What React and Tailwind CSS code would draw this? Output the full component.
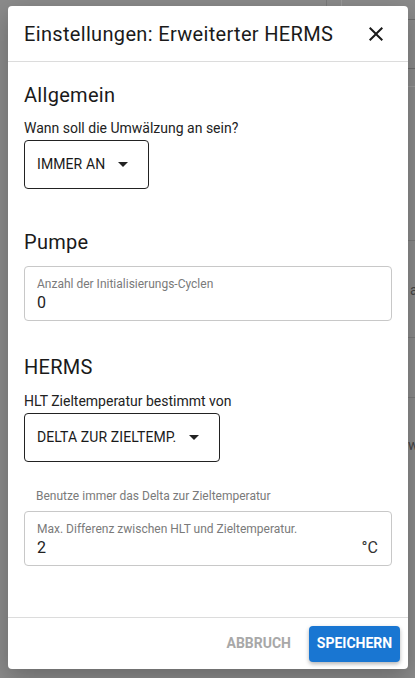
import React from "react";

function SelectBox({ value, width }) {
  return (
    <div
      className={`${width} h-[49px] mt-[2px] border border-[#222] rounded flex items-center justify-between pl-3 pr-[20px]`}
    >
      <span className="text-[14px] font-normal text-[#1a1a1a] tracking-[0.1px]">{value}</span>
      <svg width="10" height="5" viewBox="0 0 10 5">
        <path d="M0 0 L10 0 L5 5 Z" fill="#222" />
      </svg>
    </div>
  );
}

function TextField({ label, value, unit }) {
  return (
    <div className="h-[55px] border border-[#c8c8c8] rounded px-3 pt-[9px] flex flex-col">
      <span className="text-[12px] leading-[16px] text-[#7a7a7a]">{label}</span>
      <div className="flex justify-between items-center mt-[1px]">
        <span className="text-[16px] leading-[20px] text-[#222]">{value}</span>
        {unit && <span className="text-[16px] leading-[20px] text-[#333] pr-[1px]">{unit}</span>}
      </div>
    </div>
  );
}

function App() {
  return (
    <div className="min-h-screen h-[678px] bg-[#8b8b8b] relative overflow-hidden font-['Roboto',sans-serif]">
      {/* faint content behind the overlay */}
      <div className="absolute left-[408px] top-[19px] w-[7px] h-[1px] bg-[#6e6e6e]" />
      <div className="absolute left-[408px] top-[68px] w-[7px] h-[1px] bg-[#6e6e6e]" />
      <div className="absolute left-[408px] top-[86px] w-[7px] h-[1px] bg-[#9a9a9a]" />
      <div className="absolute left-[408px] top-[240px] w-[7px] h-[1px] bg-[#7a7a7a]" />
      <div className="absolute left-[410px] top-[280px] text-[14px] text-[#444]">at</div>
      <div className="absolute left-[408px] top-[337px] w-[7px] h-[1px] bg-[#7a7a7a]" />
      <div className="absolute left-[408px] top-[397px] w-[7px] h-[1px] bg-[#7a7a7a]" />
      <div className="absolute left-[408px] top-[435px] text-[14px] text-[#444]">wi</div>
      <div className="absolute left-[326px] top-0 w-[1px] h-[6px] bg-[#7a7a7a]" />
      <div className="absolute left-[341px] top-0 w-[1px] h-[6px] bg-[#9a9a9a]" />

      <div className="pt-[6px] pl-2 relative">
        <div className="w-[400px] h-[663px] bg-white rounded shadow-[0_8px_24px_rgba(0,0,0,0.25)] flex flex-col">
          <div className="h-[56px] px-4 flex items-center justify-between border-b border-[#dcdcdc]">
            <span className="text-[20px] text-[#1a1a1a] tracking-[0.33px]">Einstellungen: Erweiterter HERMS</span>
            <svg width="24" height="24" viewBox="0 0 24 24" className="mr-[4px]">
              <path
                d="M19 6.41 17.59 5 12 10.59 6.41 5 5 6.41 10.59 12 5 17.59 6.41 19 12 13.41 17.59 19 19 17.59 13.41 12z"
                fill="#1a1a1a"
              />
            </svg>
          </div>

          <div className="flex-1 px-4 pt-[19px] flex flex-col">
            <h2 className="text-[20px] leading-[28px] text-[#1a1a1a] tracking-[0.3px]">Allgemein</h2>
            <p className="mt-[9px] text-[14px] leading-[20px] text-[#222]">Wann soll die Umwälzung an sein?</p>
            <SelectBox value="IMMER AN" width="w-[125px]" />

            <h2 className="mt-[39px] text-[20px] leading-[28px] text-[#1a1a1a] tracking-[0.3px]">Pumpe</h2>
            <div className="mt-[10px]">
              <TextField label="Anzahl der Initialisierungs-Cyclen" value="0" />
            </div>

            <h2 className="mt-[32px] text-[20px] leading-[28px] text-[#1a1a1a] tracking-[0.3px]">HERMS</h2>
            <p className="mt-[10px] text-[14px] leading-[20px] text-[#222]">HLT Zieltemperatur bestimmt von</p>
            <SelectBox value="DELTA ZUR ZIELTEMP." width="w-[196px]" />

            <p className="mt-[26px] pl-3 text-[12px] leading-[16px] text-[#7a7a7a]">
              Benutze immer das Delta zur Zieltemperatur
            </p>
            <div className="mt-[7px]">
              <TextField label="Max. Differenz zwischen HLT und Zieltemperatur." value="2" unit="°C" />
            </div>
          </div>

          <div className="h-[52px] border-t border-[#dcdcdc] flex items-center justify-end gap-[18px] px-2">
            <span className="text-[14px] font-bold text-[#a8a8a8]">ABBRUCH</span>
            <button className="h-[36px] w-[91px] rounded bg-[#1976d2] text-white text-[14px] font-bold shadow-[0_2px_4px_rgba(0,0,0,0.3)]">
              SPEICHERN
            </button>
          </div>
        </div>
      </div>
    </div>
  );
}

export default App;
